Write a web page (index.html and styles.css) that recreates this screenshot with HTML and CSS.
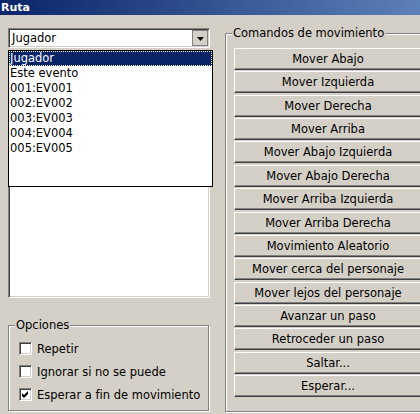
FILE: index.html
```html
<!DOCTYPE html>
<html lang="es">
<head>
<meta charset="utf-8">
<title>Ruta</title>
<link rel="stylesheet" href="styles.css">
</head>
<body>
<div class="window">
  <div class="titlebar"><span class="title">Ruta</span></div>
  <div class="content">
    <div class="left">
      <div class="combo">
        <span class="combo-text">Jugador</span>
        <span class="combo-btn">
          <svg width="7" height="4" viewBox="0 0 7 4"><path d="M0 0H7L3.5 4Z" fill="#000"/></svg>
        </span>
        <ul class="popup">
          <li class="item selected">Jugador</li>
          <li class="item">Este evento</li>
          <li class="item">001:EV001</li>
          <li class="item">002:EV002</li>
          <li class="item">003:EV003</li>
          <li class="item">004:EV004</li>
          <li class="item">005:EV005</li>
          <li class="item"></li>
          <li class="item"></li>
        </ul>
      </div>
      <div class="listbox"></div>
      <fieldset class="group options">
        <legend>Opciones</legend>
        <label class="check-row"><span class="checkbox"></span>Repetir</label>
        <label class="check-row"><span class="checkbox"></span>Ignorar si no se puede</label>
        <label class="check-row"><span class="checkbox checked"><svg width="7" height="7" viewBox="0 0 7 7"><path d="M0 2L2 4L6 0V3L2 7L0 5Z" fill="#000"/></svg></span>Esperar a fin de movimiento</label>
      </fieldset>
    </div>
    <fieldset class="group commands">
      <legend>Comandos de movimiento</legend>
      <div class="buttons">
        <button class="btn">Mover Abajo</button>
        <button class="btn">Mover Izquierda</button>
        <button class="btn">Mover Derecha</button>
        <button class="btn">Mover Arriba</button>
        <button class="btn">Mover Abajo Izquierda</button>
        <button class="btn">Mover Abajo Derecha</button>
        <button class="btn">Mover Arriba Izquierda</button>
        <button class="btn">Mover Arriba Derecha</button>
        <button class="btn">Movimiento Aleatorio</button>
        <button class="btn">Mover cerca del personaje</button>
        <button class="btn">Mover lejos del personaje</button>
        <button class="btn">Avanzar un paso</button>
        <button class="btn">Retroceder un paso</button>
        <button class="btn">Saltar...</button>
        <button class="btn">Esperar...</button>
      </div>
    </fieldset>
  </div>
</div>
</body>
</html>
```
FILE: styles.css
```css
html, body {
  margin: 0;
  padding: 0;
  overflow: hidden;
}
body {
  width: 420px;
  height: 414px;
  background: #d4d0c8;
  font-family: "DejaVu Sans", Verdana, sans-serif;
  font-size: 11.5px;
  color: #000;
}
.window {
  display: flex;
  flex-direction: column;
  width: 420px;
  height: 414px;
  overflow: hidden;
}
.titlebar {
  height: 15px;
  flex: none;
  background: linear-gradient(to right, #0a246a, #5c80b9);
  display: flex;
  align-items: center;
}
.title {
  color: #fff;
  font-weight: bold;
  font-size: 11px;
  line-height: 15px;
  padding-left: 1px;
}
.content {
  display: flex;
  align-items: flex-start;
  padding-left: 8px;
}
.left {
  width: 202px;
  flex: none;
  display: flex;
  flex-direction: column;
}
.combo {
  position: relative;
  margin-top: 13px;
  height: 20px;
  box-sizing: border-box;
  background: #fff;
  border: 1px solid;
  border-color: #808080 #fff #fff #808080;
  box-shadow: inset 1px 1px 0 #404040, inset -1px -1px 0 #d4d0c8;
  display: flex;
  align-items: center;
  padding: 1px;
}
.combo-text {
  flex: 1;
  padding-left: 2px;
  line-height: 16px;
}
.combo-btn {
  width: 16px;
  height: 16px;
  box-sizing: border-box;
  background: #d4d0c8;
  border: 1px solid #808080;
  display: flex;
  align-items: center;
  justify-content: center;
  padding: 2px 0 0 1px;
}
.popup {
  position: absolute;
  left: -1px;
  top: 21px;
  width: 203px;
  margin: 0;
  padding: 0;
  list-style: none;
  background: #fff;
  border: 1px solid #000;
  z-index: 2;
}
.item {
  height: 15px;
  line-height: 15px;
  padding-left: 1px;
  white-space: nowrap;
  box-sizing: border-box;
}
.item.selected {
  background: #0a246a;
  color: #fff;
  border: 1px dotted #fff7c8;
  line-height: 13px;
  padding-left: 0;
}
.listbox {
  margin-top: 4px;
  height: 246px;
  box-sizing: border-box;
  background: #fff;
  border: 1px solid;
  border-color: #808080 #fff #fff #808080;
  box-shadow: inset 1px 1px 0 #404040, inset -1px -1px 0 #d4d0c8;
}
.group {
  margin: 0;
  border: 1px solid #808080;
  box-shadow: inset 1px 1px 0 #fff, 1px 1px 0 #fff;
  min-width: 0;
}
.group legend {
  background: #d4d0c8;
  padding: 0 1px;
  line-height: 14px;
  margin-left: 6px;
}
.options {
  margin-top: 20px;
  width: 201px;
  box-sizing: border-box;
  padding: 5px 0 4px 0;
  display: flex;
  flex-direction: column;
}
.check-row {
  height: 23px;
  display: flex;
  align-items: center;
  gap: 5px;
  padding-left: 10px;
  white-space: nowrap;
}
.checkbox {
  width: 13px;
  height: 13px;
  box-sizing: border-box;
  background: #fff;
  border: 1px solid;
  border-color: #808080 #fff #fff #808080;
  box-shadow: inset 1px 1px 0 #404040, inset -1px -1px 0 #d4d0c8;
  display: flex;
  align-items: center;
  justify-content: center;
}
.commands {
  flex: none;
  margin-top: 11px;
  margin-left: 15px;
  padding: 8px 8px 14px 8px;
}
.commands legend {
  margin-left: -2px;
}
.buttons {
  display: grid;
  grid-template-columns: 188px;
  grid-auto-rows: 22px;
  row-gap: 1.36px;
}
.btn {
  font-family: inherit;
  font-size: inherit;
  color: #000;
  background: #d4d0c8;
  margin: 0;
  padding: 0;
  border: 1px solid;
  border-color: #fff #404040 #404040 #fff;
  box-shadow: inset -1px -1px 0 #808080;
  text-align: center;
  white-space: nowrap;
}
```
